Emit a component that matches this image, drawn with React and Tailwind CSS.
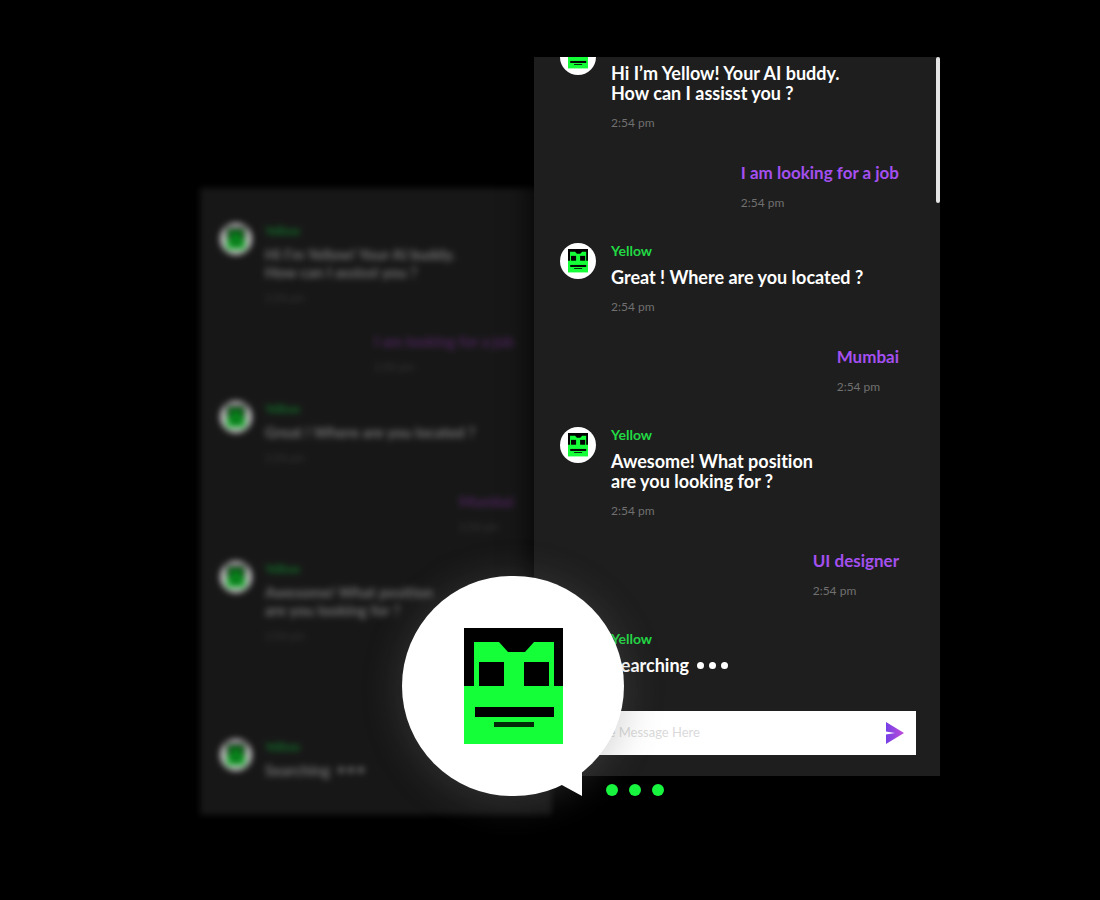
const SIZES = {
  regular: {
    list: "gap-8",
    row: "gap-[15px]",
    avatar: "size-9",
    face: "w-5",
    name: "text-sm leading-4 text-[#22d944]",
    text: "mt-2 text-lg leading-5 text-white",
    ownText: "text-[17px] leading-5 text-[#a450f0]",
    time: "mt-3 text-xs leading-4 text-[#707070]",
    dots: "gap-[5px] ml-2",
    dot: "size-[7px]",
  },
  compact: {
    list: "gap-[27px]",
    row: "gap-[13px]",
    avatar: "size-8",
    face: "w-[18px]",
    name: "text-xs leading-[15px] text-[#1b9c38]",
    text: "mt-[7px] text-[15px] leading-[18px] text-[#9a9a9a]",
    ownText: "text-[15px] leading-[18px] text-[#643078]",
    time: "mt-[10px] text-[11px] leading-[14px] text-[#4a4a4a]",
    dots: "gap-1 ml-2",
    dot: "size-1.5",
  },
};

const MESSAGES = [
  { from: "bot", lines: ["Hi I’m Yellow! Your AI buddy.", "How can I assisst you ?"], time: "2:54 pm" },
  { from: "me", lines: ["I am looking for a job"], time: "2:54 pm" },
  { from: "bot", lines: ["Great ! Where are you located ?"], time: "2:54 pm" },
  { from: "me", lines: ["Mumbai"], time: "2:54 pm" },
  { from: "bot", lines: ["Awesome! What position", "are you looking for ?"], time: "2:54 pm" },
  { from: "me", lines: ["UI designer"], time: "2:54 pm" },
  { from: "bot", lines: ["Searching"], typing: true },
];

function Face({ className }) {
  return (
    <svg viewBox="0 0 99 116" className={className} aria-hidden="true">
      <rect width="99" height="116" fill="#14ff37" />
      <path d="M0 0H99V58H90V14H70L61 24H44L35 14H10V58H0Z" fill="#000" />
      <rect x="15" y="34" width="25" height="24" fill="#000" />
      <rect x="60" y="34" width="25" height="24" fill="#000" />
      <rect x="11" y="79" width="79" height="10" fill="#000" />
      <rect x="30" y="94" width="40" height="5" fill="#032b09" />
    </svg>
  );
}

function Message({ message, size }) {
  if (message.from === "me") {
    return (
      <li className="self-end">
        <p className={`font-bold ${size.ownText}`}>{message.lines[0]}</p>
        <p className={size.time}>{message.time}</p>
      </li>
    );
  }
  return (
    <li className={`flex items-start ${size.row}`}>
      <span className={`flex shrink-0 items-center justify-center rounded-full bg-white ${size.avatar}`}>
        <Face className={size.face} />
      </span>
      <div>
        <p className={`font-bold ${size.name}`}>Yellow</p>
        <div className={`font-bold ${size.text}`}>
          {message.lines.map((line) => (
            <p key={line} className="flex items-center whitespace-nowrap">
              {line}
              {message.typing && (
                <span className={`flex ${size.dots}`}>
                  <span className={`rounded-full bg-current ${size.dot}`} />
                  <span className={`rounded-full bg-current ${size.dot}`} />
                  <span className={`rounded-full bg-current ${size.dot}`} />
                </span>
              )}
            </p>
          ))}
        </div>
        {message.time && <p className={size.time}>{message.time}</p>}
      </div>
    </li>
  );
}

function Conversation({ size, className }) {
  return (
    <ul className={`flex flex-col ${size.list} ${className}`}>
      {MESSAGES.map((message) => (
        <Message key={message.lines[0]} message={message} size={size} />
      ))}
    </ul>
  );
}

function Composer() {
  return (
    <form className="mx-6 mt-9 mb-[21px] flex h-11 items-center bg-white pr-[7px]" onSubmit={(e) => e.preventDefault()}>
      <input
        type="text"
        aria-label="Message"
        placeholder="Type Message Here"
        className="min-w-0 flex-1 bg-transparent pl-[30px] text-[13px] text-gray-900 outline-none placeholder:text-[#dadada]"
      />
      <button type="submit" aria-label="Send" className="flex size-7 items-center justify-center">
        <svg viewBox="0 0 20 22" className="w-5" aria-hidden="true">
          <defs>
            <linearGradient id="send" x1="0" y1="0" x2="1" y2="0">
              <stop offset="0" stopColor="#7440e6" />
              <stop offset="1" stopColor="#c04ad8" />
            </linearGradient>
          </defs>
          <path d="M1 0L19 11L1 22V12.5L10 11L1 9.5Z" fill="url(#send)" />
        </svg>
      </button>
    </form>
  );
}

function Launcher() {
  return (
    <button
      type="button"
      aria-label="Open chat with Yellow"
      className="absolute top-[519px] left-[202px] flex h-[220px] w-[222px] items-center justify-center rounded-full bg-white shadow-[0_4px_36px_4px_rgba(110,110,110,0.28)]"
    >
      <svg viewBox="0 0 26 32" className="absolute right-[42px] bottom-0 w-[26px]" aria-hidden="true">
        <path d="M26 0V32L4 20Z" fill="#fff" />
      </svg>
      <Face className="w-[99px]" />
    </button>
  );
}

export default function App() {
  return (
    <main className="min-h-screen overflow-hidden bg-black px-4 pt-[57px] pb-16 font-['Lato',sans-serif] [font-variant-ligatures:none]">
      <div className="mx-auto w-full max-w-[780px] pl-10">
        <div className="relative flex items-start">
          <section
            aria-hidden="true"
            className="mt-[131px] w-[352px] shrink-0 bg-[#1f1f1f] pt-[35px] pr-[38px] pb-9 pl-5 opacity-75 blur-[3px]"
          >
            <Conversation size={SIZES.compact} className="" />
          </section>
          <section
            aria-label="Chat with Yellow"
            className="relative -ml-[18px] min-w-0 flex-1 overflow-hidden bg-[#1e1e1e] shadow-[0_0_24px_4px_rgba(0,0,0,0.75)]"
          >
            <Conversation size={SIZES.regular} className="-mt-[18px] pr-[41px] pl-[26px]" />
            <Composer />
            <span className="absolute top-0 right-0 h-[146px] w-1 rounded-full bg-[#e4e4e4]" />
          </section>
          <Launcher />
          <div className="absolute top-[727px] left-[406px] flex gap-[11px]">
            <span className="size-3 rounded-full bg-[#17f53f]" />
            <span className="size-3 rounded-full bg-[#17f53f]" />
            <span className="size-3 rounded-full bg-[#17f53f]" />
          </div>
        </div>
      </div>
    </main>
  );
}
